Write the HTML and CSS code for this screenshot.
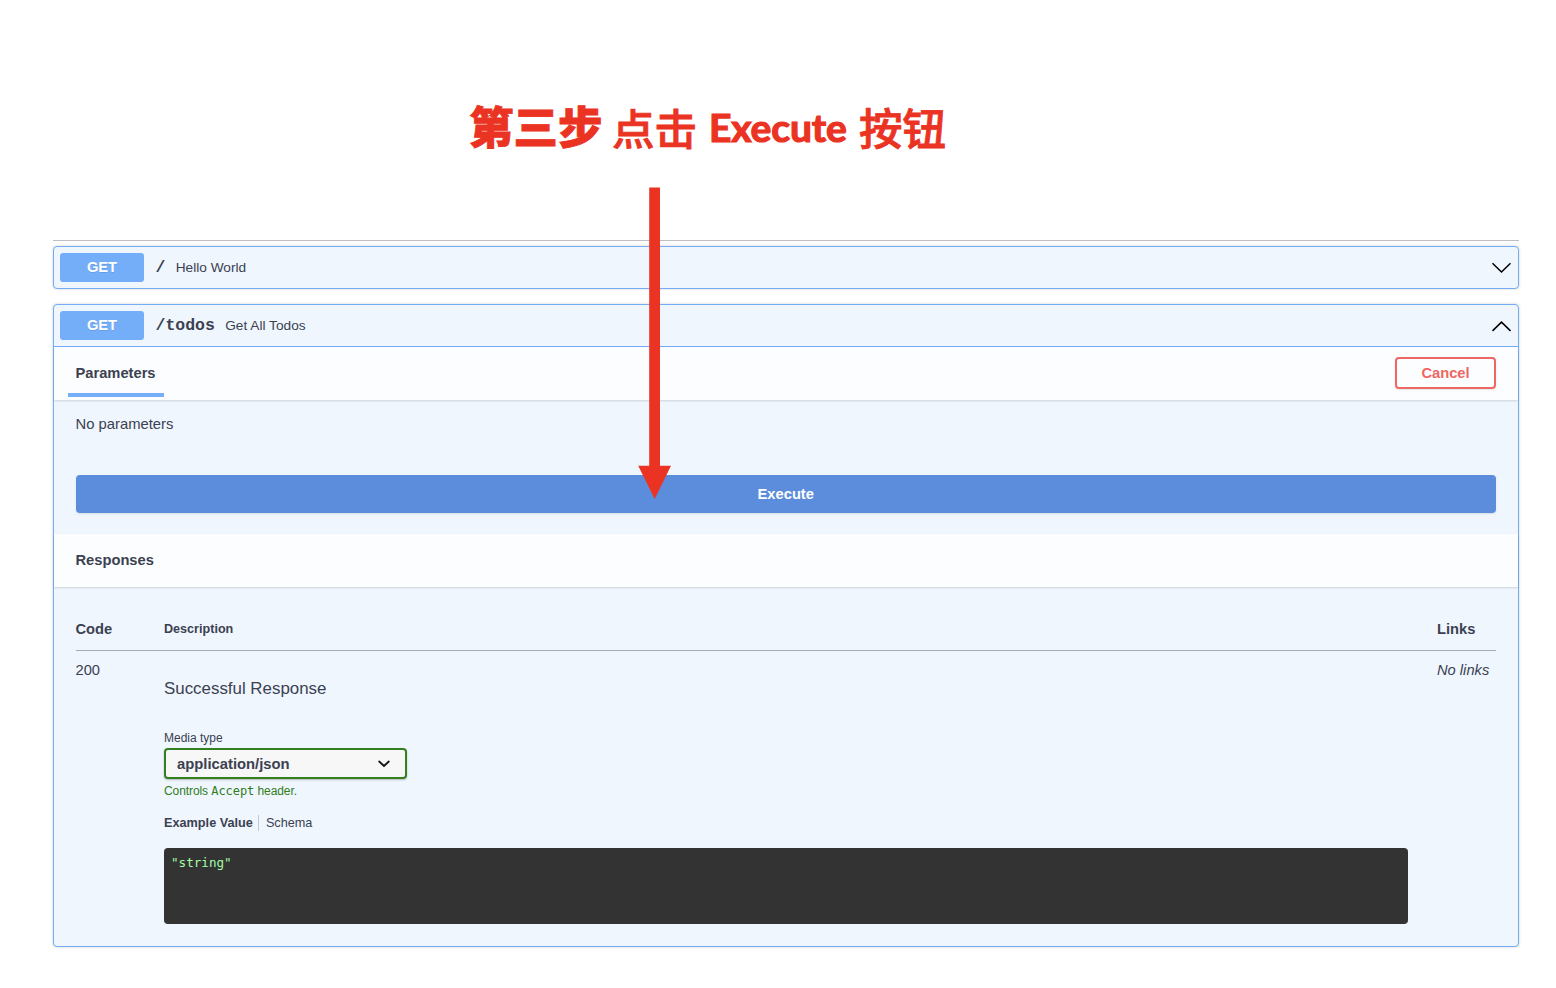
FILE: index.html
```html
<!DOCTYPE html>
<html lang="zh-CN">
<head>
<meta charset="utf-8">
<title>API Docs</title>
<link rel="stylesheet" href="styles.css">
</head>
<body>
<main class="page">
  <h1 class="step"><span class="step-num">第三步</span><span class="step-verb">点击</span><span class="step-latin">Execute</span><span class="step-noun">按钮</span></h1>
  <svg class="arrow" width="34" height="312" viewBox="0 0 34 312"><path d="M11.2 .5H22V278.7H33L16.7 312 .2 278.7H11.2Z" fill="#eb3323"/></svg>
  <div class="docs">
    <section class="op">
      <div class="summary">
        <span class="method">GET</span><span class="path">/</span><span class="desc">Hello World</span>
        <svg class="chev" width="20" height="12" viewBox="0 0 20 12"><path d="M1.5 1.2 10.5 10 19.5 1.2"/></svg>
      </div>
    </section>
    <section class="op open">
      <div class="summary">
        <span class="method">GET</span><span class="path">/todos</span><span class="desc">Get All Todos</span>
        <svg class="chev" width="20" height="12" viewBox="0 0 20 12"><path d="M1.5 10.9 10.5 2.1 19.5 10.9"/></svg>
      </div>
      <div class="section-head">
        <span class="tab">Parameters</span>
        <button class="cancel">Cancel</button>
      </div>
      <div class="params">
        <p class="none">No parameters</p>
        <button class="execute">Execute</button>
      </div>
      <div class="section-head"><span class="title">Responses</span></div>
      <div class="responses">
        <div class="row head"><span class="code">Code</span><span class="dhead">Description</span><span class="links">Links</span></div>
        <div class="row">
          <span class="code">200</span>
          <div class="detail">
            <p class="success">Successful Response</p>
            <span class="label">Media type</span>
            <div class="select"><span>application/json</span><svg width="12" height="8" viewBox="0 0 12 8"><path d="M1.2 1.5 6 6 10.8 1.5"/></svg></div>
            <span class="hint">Controls <code>Accept</code> header.</span>
            <div class="tabs"><b>Example Value</b><span>Schema</span></div>
            <pre class="example">"string"</pre>
          </div>
          <em class="links">No links</em>
        </div>
      </div>
    </section>
  </div>
</main>
</body>
</html>
```
FILE: styles.css
```css
* { box-sizing: border-box; }
body { margin: 0; background: #fff; color: #3b4151; font-family: "Liberation Sans", Arial, sans-serif; }
p, pre, h1 { margin: 0; }
button { font-family: inherit; padding: 0; }
.page { position: relative; width: 1556px; height: 988px; padding-top: 97px; overflow: hidden; }
.step { display: flex; height: 63px; margin-left: 469px; line-height: 60px; color: #eb3323; white-space: nowrap; font-family: "Noto Sans CJK SC", sans-serif; font-weight: 700; font-size: 42px; }
.step-num { width: 143px; font-size: 44.5px; font-weight: 900; line-height: 56px; -webkit-text-stroke: .8px #eb3323; }
.step-verb { width: 97px; font-size: 42.5px; font-weight: 500; -webkit-text-stroke: .8px #eb3323; }
.step-latin { width: 150px; font-family: Lato, sans-serif; font-size: 39px; font-weight: 700; letter-spacing: -.15px; -webkit-text-stroke: 1.2px #eb3323; }
.step-noun { font-size: 43.5px; font-weight: 500; line-height: 59px; -webkit-text-stroke: .8px #eb3323; }
.arrow { position: absolute; left: 638px; top: 187px; z-index: 2; }
.docs { margin: 80px 37.5px 0 53px; border-top: 1px solid #bdbec3; padding-top: 5px; }
.op { border: 1px solid #74adf6; border-radius: 4px; background: #eff6fe; box-shadow: 0 0 3px rgba(0,0,0,.19); margin-bottom: 15px; height: 43px; }
.op.open { height: 642.5px; }
.summary { display: flex; align-items: center; height: 41px; padding: 0 6.5px 0 6px; }
.open > .summary { height: 42px; border-bottom: 1px solid #74adf6; }
.method { width: 84px; height: 29px; margin-right: 11.5px; border-radius: 3px; background: #74adf8; color: #fff; font-size: 14.7px; font-weight: 700; line-height: 29px; text-align: center; text-shadow: 0 1px 0 rgba(0,0,0,.1); }
.path { font: 700 16.5px/20px "Liberation Mono", monospace; margin-right: 10.3px; padding-top: 1px; }
.desc { font-size: 13.7px; }
.chev { margin-left: auto; fill: none; stroke: #000; stroke-width: 1.5; }
.section-head { display: flex; align-items: center; justify-content: space-between; height: 53px; padding: 0 21.5px; background: #fcfdff; box-shadow: 0 1px 2px rgba(0,0,0,.14); font-size: 14.7px; font-weight: 700; position: relative; }
.tab { align-self: stretch; margin-left: -8px; margin-bottom: 3px; padding: 0 8px; border-bottom: 4px solid #74adf8; line-height: 53px; }
.title { padding-bottom: 1px; }
.cancel { width: 101px; height: 32px; margin-bottom: 1px; border: 2px solid #ee6762; border-radius: 4px; background: transparent; box-shadow: 0 1px 2px rgba(0,0,0,.1); color: #ee6762; font-size: 14.7px; font-weight: 700; }
.params { height: 134px; padding: 15px 21.5px 0; }
.none { height: 60px; font-size: 14.8px; line-height: 18px; }
.execute { display: block; width: 100%; height: 38px; border: 0; border-radius: 4px; background: #5b8ddc; box-shadow: 0 1px 2px rgba(0,0,0,.1); color: #fff; font-size: 14.7px; font-weight: 700; }
.responses { padding: 31px 21.5px 0; }
.row { display: flex; font-size: 14.7px; line-height: 18px; padding-top: 10px; }
.row.head { height: 33px; padding-top: 2px; border-bottom: 1px solid #a5abb5; font-weight: 700; }
.code { width: 88.5px; flex: none; }
.dhead { width: 1273px; font-size: 12.6px; }
.links { flex: none; }
.detail { width: 1243.5px; flex: none; margin-right: 29.5px; padding-top: 18px; display: flex; flex-direction: column; }
.success { font-size: 16.9px; line-height: 20px; height: 51px; }
.label { font-size: 12px; line-height: 16px; height: 18px; }
.select { display: flex; align-items: center; justify-content: space-between; width: 243px; height: 31px; padding: 0 15px 0 11px; border: 2px solid #348020; border-radius: 4px; background: #f7f7f7; box-shadow: 0 1px 2px rgba(0,0,0,.25); font-size: 14.8px; font-weight: 700; }
.select svg { fill: none; stroke: #111; stroke-width: 1.8; stroke-linecap: round; }
.hint { color: #2f7d1b; font-size: 12px; letter-spacing: -.08px; line-height: 16px; height: 36px; padding-top: 4px; }
.hint code { font: 12px "DejaVu Sans Mono", monospace; }
.tabs { display: flex; height: 33px; font-size: 12.7px; line-height: 16px; }
.tabs span { margin-left: 5px; padding-left: 7px; height: 16px; border-left: 1px solid #c3c9d2; }
.example { height: 76px; padding: 6px 7px; border-radius: 4px; background: #333; color: #a2fca2; font: 12.6px/18px "DejaVu Sans Mono", monospace; }
```
